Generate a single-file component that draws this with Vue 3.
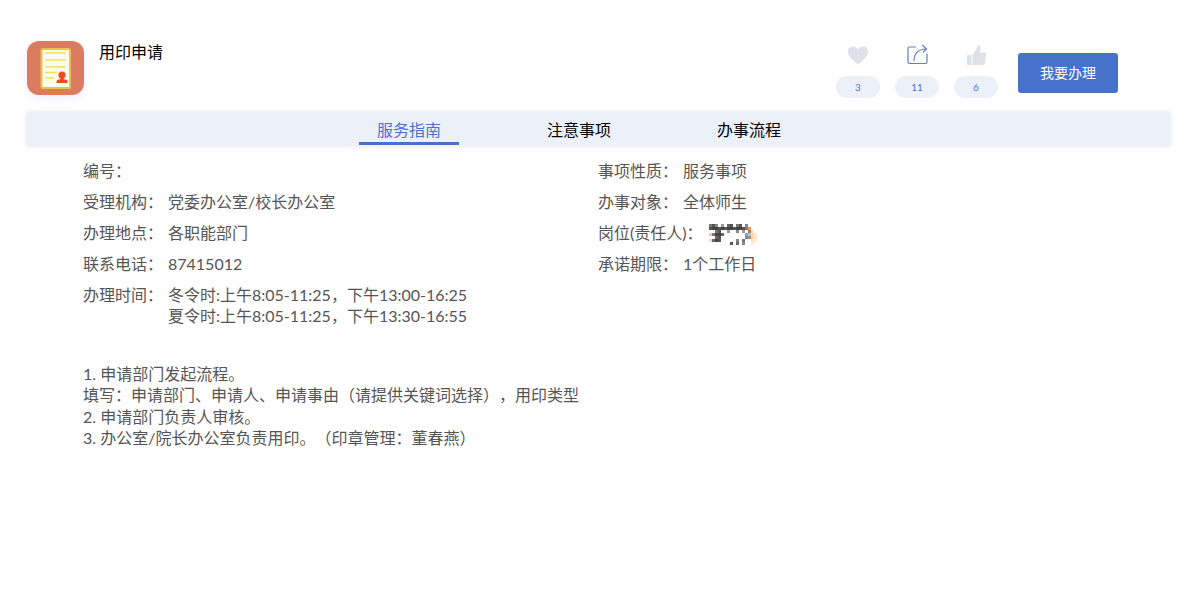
<template>
  <div class="page">
    <div class="head">
      <div class="logo">
        <svg width="57" height="54" viewBox="0 0 57 54">
          <rect x="14.500" y="8" width="28.500" height="39" rx="1.500" fill="#fdfbe9" stroke="#e8c54a" stroke-width="2" />
          <path d="M18 12H39M18 19H39M18 26H39M18 31.500H30M18 37H27" stroke="#efe35c" stroke-width="1.600" />
          <circle cx="35" cy="34" r="3.600" fill="#f04a1e" />
          <path d="M33.500 36h3l.5 2.500c2.500 0 3.500.5 3.500 2.500v1h-11v-1c0-2 1-2.500 3.500-2.500z" fill="#f04a1e" />
        </svg>
      </div>
      <div class="title">用印申请</div>
      <div class="actions">
        <div v-for="a in actions" :key="a.key" class="action">
          <svg class="action-icon" width="24" height="24" viewBox="0 0 24 24">
            <path v-if="a.key === 'like'" d="M12 21.500C6 16.500 2 13.500 2 8.500C2 5.300 4.300 3.500 6.900 3.500C9 3.500 11 4.500 12 6.500C13 4.500 15 3.500 17.100 3.500C19.700 3.500 22 5.300 22 8.500C22 13.500 18 16.500 12 21.500Z" fill="#e0e0ea" />
            <g v-else-if="a.key === 'share'" fill="none" stroke="#5f7fd0" stroke-width="1.200">
              <path d="M11 4H4.500Q3 4 3 5.500V19Q3 20.500 4.500 20.500H20.500Q22 20.500 22 19V11" />
              <path d="M9 18C9 11 13 6 21 6M17 2L21.500 5.800L18 9.500" />
            </g>
            <g v-else fill="#e0e0ea">
              <rect x="3" y="12" width="4.500" height="10" rx="1" />
              <path d="M8.500 12L12.500 6Q13 2 15 2Q17.500 2.500 16.500 6.500L16 9.500H20.500Q22.500 9.500 22.200 11.500L20.800 20.500Q20.500 22 19 22H8.500Z" />
            </g>
          </svg>
          <span class="count">{{ a.count }}</span>
        </div>
        <button class="apply">我要办理</button>
      </div>
    </div>

    <div class="tabs">
      <div v-for="(t, i) in tabs" :key="t" class="tab" :class="{ active: i === 0 }">{{ t }}</div>
    </div>

    <div class="info">
      <div class="col left">
        <div class="row"><span class="label">编号&#xFF1A;</span></div>
        <div class="row"><span class="label">受理机构&#xFF1A;</span><span>党委办公室/校长办公室</span></div>
        <div class="row"><span class="label">办理地点&#xFF1A;</span><span>各职能部门</span></div>
        <div class="row"><span class="label">联系电话&#xFF1A;</span><span>87415012</span></div>
        <div class="row"><span class="label">办理时间&#xFF1A;</span><span class="hours">冬令时:上午8:05-11:25&#xFF0C;下午13:00-16:25<br />夏令时:上午8:05-11:25&#xFF0C;下午13:30-16:55</span></div>
      </div>
      <div class="col">
        <div class="row"><span class="label">事项性质&#xFF1A;</span><span>服务事项</span></div>
        <div class="row"><span class="label">办事对象&#xFF1A;</span><span>全体师生</span></div>
        <div class="row">
          <span class="label wide">岗位(责任人)&#xFF1A;</span>
          <svg class="blur" width="48" height="21" viewBox="0 0 16 7" shape-rendering="crispEdges">
            <rect v-for="(p, i) in blurCells" :key="i" :x="p[0]" :y="p[1]" width="1" height="1" :fill="p[2]" />
          </svg>
        </div>
        <div class="row"><span class="label">承诺期限&#xFF1A;</span><span>1个工作日</span></div>
      </div>
    </div>

    <div class="steps">
      <p>1. 申请部门发起流程。</p>
      <p>填写&#xFF1A;申请部门、申请人、申请事由&#xFF08;请提供关键词选择&#xFF09;&#xFF0C;用印类型</p>
      <p>2. 申请部门负责人审核。</p>
      <p>3. 办公室/院长办公室负责用印。&#xFF08;印章管理&#xFF1A;董春燕&#xFF09;</p>
    </div>
  </div>
</template>

<script setup>
const actions = [
  { key: 'like', count: 3 },
  { key: 'share', count: 11 },
  { key: 'thumb', count: 6 }
]
const tabs = ['服务指南', '注意事项', '办事流程']

// mosaic over the redacted name
const blurCells = [
  [0, 0, '#777'], [1, 0, '#555'], [2, 0, '#888'], [4, 0, '#999'], [6, 0, '#666'], [7, 0, '#555'], [9, 0, '#777'], [10, 0, '#555'], [12, 0, '#888'],
  [0, 1, '#555'], [1, 1, '#444'], [2, 1, '#444'], [3, 1, '#555'], [4, 1, '#444'], [5, 1, '#555'], [6, 1, '#444'], [7, 1, '#444'], [8, 1, '#555'], [9, 1, '#444'], [10, 1, '#444'], [11, 1, '#555'], [12, 1, '#876'], [13, 1, '#d9a066'],
  [2, 2, '#777'], [3, 2, '#555'], [6, 2, '#999'], [9, 2, '#888'], [11, 2, '#999'], [13, 2, '#c97a3a'], [14, 2, '#fde4bd'],
  [0, 3, '#e8c9a0'], [1, 3, '#777'], [2, 3, '#444'], [3, 3, '#444'], [4, 3, '#666'], [12, 3, '#7ea8d0'], [13, 3, '#a5c6e6'], [14, 3, '#fdd9a8'], [15, 3, '#fde9c9'],
  [2, 4, '#666'], [3, 4, '#555'], [12, 4, '#5a93c9'], [13, 4, '#b98a5f'], [14, 4, '#fdd9a8'], [15, 4, '#fde9c9'],
  [0, 5, '#f4d9b0'], [1, 5, '#666'], [2, 5, '#444'], [3, 5, '#555'], [9, 5, '#888'], [11, 5, '#777'], [14, 5, '#fde4bd'], [15, 5, '#fdeed6'],
  [7, 6, '#555'], [9, 6, '#666'], [11, 6, '#888'], [14, 6, '#fdeed6']
]
</script>

<style scoped>
.page {
  width: 1193px;
  height: 607px;
  box-sizing: border-box;
  padding: 41px 23px 0 27px;
  color: #555;
  font-family: Lato, "Noto Sans CJK SC", "Noto Sans", sans-serif;
  font-size: 16px;
  text-spacing-trim: space-all;
  overflow: hidden;
}
.head {
  display: flex;
  height: 71px;
}
.logo {
  width: 57px;
  height: 54px;
  border-radius: 12px;
  background: #dc7b5f;
  box-shadow: 0 2px 8px rgba(90, 90, 200, 0.12);
}
.logo svg {
  display: block;
}
.title {
  margin-left: 15px;
  color: #000;
  line-height: 22px;
}
.actions {
  display: flex;
  margin-left: auto;
  margin-right: 52px;
  gap: 15px;
}
.action {
  width: 44px;
  display: flex;
  flex-direction: column;
  align-items: center;
}
.action-icon {
  margin-top: 2px;
  height: 24px;
}
.count {
  margin-top: 9px;
  width: 44px;
  height: 22px;
  line-height: 22px;
  border-radius: 11px;
  background: #ecf0f8;
  color: #5a6fc9;
  font-size: 10px;
  text-align: center;
}
.apply {
  margin: 12px 0 0 5px;
  width: 100px;
  height: 40px;
  padding: 0 0 2px;
  border: 0;
  border-radius: 3px;
  background: #4672cc;
  color: #fff;
  font: inherit;
  font-size: 14px;
}
.tabs {
  display: flex;
  justify-content: center;
  align-items: flex-start;
  gap: 70px;
  box-sizing: border-box;
  height: 34px;
  padding-right: 39px;
  background: #ecf0f8;
  box-shadow: 0 0 5px rgba(0, 0, 0, 0.12);
}
.tab {
  width: 100px;
  height: 30px;
  line-height: 35px;
  color: #000;
  text-align: center;
}
.tab.active {
  color: #4672cc;
  border-bottom: 3px solid #4672cc;
}
.info {
  display: flex;
  padding: 14px 0 0 56px;
}
.col {
  width: 515px;
}
.row {
  display: flex;
  line-height: 22px;
  margin-bottom: 9px;
}
.label {
  width: 85px;
  flex: none;
}
.label.wide {
  width: 111px;
}
.hours {
  line-height: 21px;
}
.blur {
  margin: 2px 0 -1px;
}
.steps {
  margin: 28px 0 0 56px;
  line-height: 21.330px;
}
.steps p {
  margin: 0;
}
</style>
